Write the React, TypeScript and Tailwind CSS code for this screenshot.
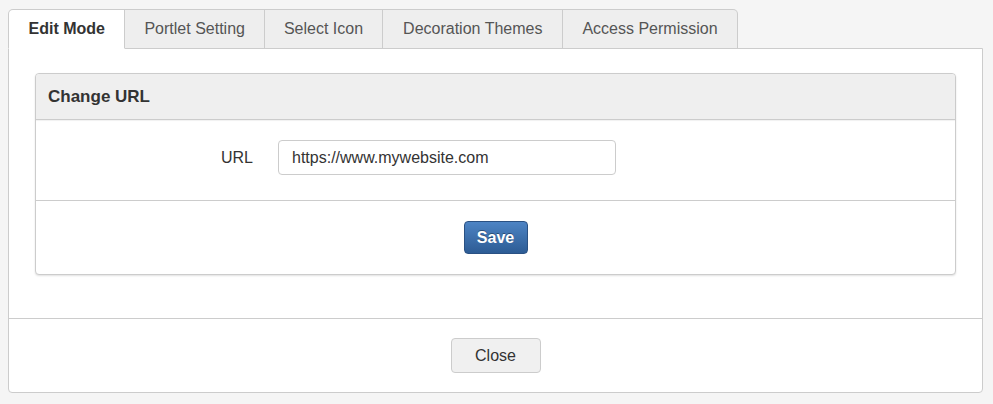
import React from "react";

const tabs = [
  { label: "Edit Mode", pad: "px-[19.5px]" },
  { label: "Portlet Setting", pad: "px-[19px]" },
  { label: "Select Icon", pad: "px-[19px]" },
  { label: "Decoration Themes", pad: "px-[20px]" },
  { label: "Access Permission", pad: "px-[19px]" },
];

export default function App() {
  return (
    <div
      className="min-h-[404px] w-[993px] bg-[#f5f5f5] pl-2 pr-[10px] pt-[9px] pb-3 text-[16px] text-[#333]"
      style={{ fontFamily: '"Liberation Sans", Arial, sans-serif' }}
    >
      <div className="flex">
        {tabs.map((t, i) => {
          const active = i === 0;
          return (
            <div
              key={t.label}
              className={[
                "relative z-10 -mb-px flex h-[40px] items-center border-t border-r border-[#ccc] leading-none",
                t.pad,
                i === 0 ? "border-l rounded-tl-[5px]" : "",
                i === tabs.length - 1 ? "rounded-tr-[5px]" : "",
                active ? "bg-white border-b border-b-white font-bold text-[#333]" : "bg-[#eeeeee] border-b border-b-[#ccc] text-[#555]",
              ].join(" ")}
            >
              {t.label}
            </div>
          );
        })}
      </div>
      <div className="rounded-b-[4px] border border-[#ccc] bg-white">
        <div className="px-[26px] pt-[24px] pb-[43px]">
          <div className="rounded-[4px] border border-[#ccc] bg-white shadow-[0_1px_2px_rgba(0,0,0,0.12)]">
            <div className="flex h-[46px] items-center rounded-t-[4px] border-b border-[#ccc] bg-[#efefef] px-3 text-[17px] font-bold text-[#333] shadow-[0_1px_1px_rgba(0,0,0,0.06)]">
              Change URL
            </div>
            <div className="flex items-center gap-[25px] pt-[20px] pb-[25px]">
              <div className="w-[217px] text-right text-[#333]">URL</div>
              <div className="flex h-[35px] w-[338px] items-center rounded-[4px] border border-[#ccc] bg-white pl-[13px] text-[#333]">
                https://www.mywebsite.com
              </div>
            </div>
            <div className="flex justify-center border-t border-[#ccc] py-[20px]">
              <button
                className="h-[33px] w-[64px] rounded-[4px] border border-[#2a5183] bg-gradient-to-b from-[#4d84c4] to-[#2d5c95] font-bold text-white [text-shadow:0_-1px_0_rgba(0,0,0,0.35)]"
                style={{ fontFamily: '"Liberation Sans", Arial, sans-serif' }}
              >
                Save
              </button>
            </div>
          </div>
        </div>
        <div className="flex justify-center border-t border-[#ccc] py-[19px]">
          <button
            className="h-[35px] w-[90px] rounded-[4px] border border-[#ccc] bg-[#f0f0f0] text-[#333]"
            style={{ fontFamily: '"Liberation Sans", Arial, sans-serif' }}
          >
            Close
          </button>
        </div>
      </div>
    </div>
  );
}
